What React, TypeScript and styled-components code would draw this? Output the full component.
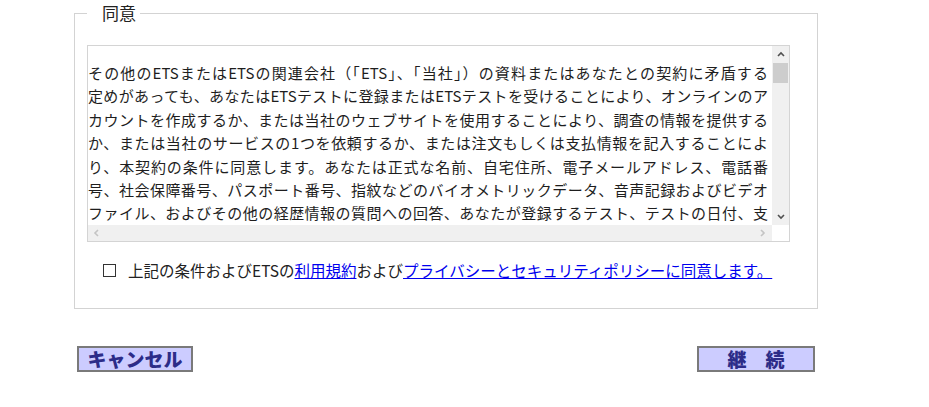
import styled, { createGlobalStyle } from 'styled-components'

const GlobalStyle = createGlobalStyle`
  html, body {
    margin: 0;
    padding: 0;
    background: #ffffff;
  }
  body {
    font-family: "Noto Sans CJK JP", "Liberation Sans", sans-serif;
    color: #222222;
  }
`;

const Page = styled.div`
  width: 744px;
  margin-left: 74px;
  padding-top: 3px;
`;

const AgreementBox = styled.fieldset`
  margin: 0;
  padding: 22px 27px 28px 12px;
  border: 1px solid #d3d3d3;
  box-sizing: border-box;
  width: 744px;
`;

const Legend = styled.legend`
  padding: 0 4px 0 15px;
  margin-left: 0;
  font-size: 17px;
  line-height: 20px;
  color: #222222;
`;

const TextFrame = styled.div`
  display: grid;
  grid-template-columns: 1fr 17px;
  grid-template-rows: 1fr 16px;
  width: 703px;
  height: 197px;
  box-sizing: border-box;
  border: 1px solid #d4d4d4;
  background: #ffffff;
`;

const TextBody = styled.div`
  overflow: hidden;
  padding: 15px 4px 0 0;
  font-size: 15px;
  line-height: 23.4px;
  color: #1e1e1e;
`;

const TextLine = styled.div`
  text-align: justify;
  text-align-last: justify;
  text-justify: inter-character;
`;

const VScroll = styled.div`
  display: flex;
  flex-direction: column;
  background: #f0f0f0;
`;

const ScrollButton = styled.div<{ $size?: number }>`
  display: flex;
  align-items: center;
  justify-content: center;
  width: ${(p) => p.$size || 17}px;
  height: 17px;
  flex: none;
`;

const Thumb = styled.div`
  width: 15px;
  height: 20px;
  margin-left: 1px;
  background: #cdcdcd;
`;

const TrackFill = styled.div`
  flex: 1;
`;

const HScroll = styled.div`
  display: flex;
  align-items: center;
  justify-content: space-between;
  padding: 0 2px;
  background: #f0f0f0;
`;

const Corner = styled.div`
  background: #ffffff;
`;

const AgreeRow = styled.label`
  display: flex;
  align-items: center;
  gap: 12px;
  margin-top: 18px;
  padding-left: 16px;
  font-size: 15.5px;
  line-height: 20px;
  color: #222222;
`;

const Check = styled.input`
  appearance: none;
  width: 13px;
  height: 13px;
  margin: 0;
  border: 1px solid #333333;
  background: #ffffff;
  box-sizing: border-box;
`;

const Link = styled.a`
  color: #0000ee;
  text-decoration: underline;
`;

const ButtonRow = styled.div`
  display: flex;
  justify-content: space-between;
  margin-top: 37px;
  padding: 0 3px;
`;

const ImageButton = styled.button<{ $w: number }>`
  width: ${(p) => p.$w}px;
  height: 26px;
  padding: 0;
  border: 2px solid #7a7a7a;
  background: #ccccff;
  color: #2c2c88;
  font-family: "Noto Sans CJK JP", sans-serif;
  font-weight: 900;
  font-size: 19px;
  line-height: 20px;
  letter-spacing: 0;
  cursor: pointer;
`;

const Chevron = ({ dir, color }: { dir: 'up' | 'down' | 'left' | 'right', color: string }) => {
  const pts = {
    up: '1,5 4,2 7,5',
    down: '1,2 4,5 7,2',
    left: '5,1 2,4 5,7',
    right: '2,1 5,4 2,7',
  }[dir]
  return (
    <svg width="8" height="8" viewBox="0 0 8 8">
      <polyline points={pts} fill="none" stroke={color} strokeWidth="1.6" />
    </svg>
  )
}

const lines = [
  'その他のETSまたはETSの関連会社（「ETS」、「当社」）の資料またはあなたとの契約に矛盾する',
  '定めがあっても、あなたはETSテストに登録またはETSテストを受けることにより、オンラインのア',
  'カウントを作成するか、または当社のウェブサイトを使用することにより、調査の情報を提供する',
  'か、または当社のサービスの1つを依頼するか、または注文もしくは支払情報を記入することによ',
  'り、本契約の条件に同意します。あなたは正式な名前、自宅住所、電子メールアドレス、電話番',
  '号、社会保障番号、パスポート番号、指紋などのバイオメトリックデータ、音声記録およびビデオ',
  'ファイル、およびその他の経歴情報の質問への回答、あなたが登録するテスト、テストの日付、支',
]

export default function App() {
  return (
    <>
      <GlobalStyle />
      <Page>
        <AgreementBox>
          <Legend>同意</Legend>
          <TextFrame>
            <TextBody>
              {lines.map((l, i) => <TextLine key={i}>{l}</TextLine>)}
            </TextBody>
            <VScroll>
              <ScrollButton><Chevron dir="up" color="#505050" /></ScrollButton>
              <Thumb />
              <TrackFill />
              <ScrollButton><Chevron dir="down" color="#505050" /></ScrollButton>
            </VScroll>
            <HScroll>
              <ScrollButton $size={14}><Chevron dir="left" color="#c4c4c4" /></ScrollButton>
              <ScrollButton $size={14}><Chevron dir="right" color="#c4c4c4" /></ScrollButton>
            </HScroll>
            <Corner />
          </TextFrame>
          <AgreeRow>
            <Check type="checkbox" />
            <span>
              上記の条件およびETSの<Link href="#">利用規約</Link>および<Link href="#">プライバシーとセキュリティポリシーに同意します。</Link>
            </span>
          </AgreeRow>
        </AgreementBox>
        <ButtonRow>
          <ImageButton $w={116}>キャンセル</ImageButton>
          <ImageButton $w={118}>継　続</ImageButton>
        </ButtonRow>
      </Page>
    </>
  )
}
